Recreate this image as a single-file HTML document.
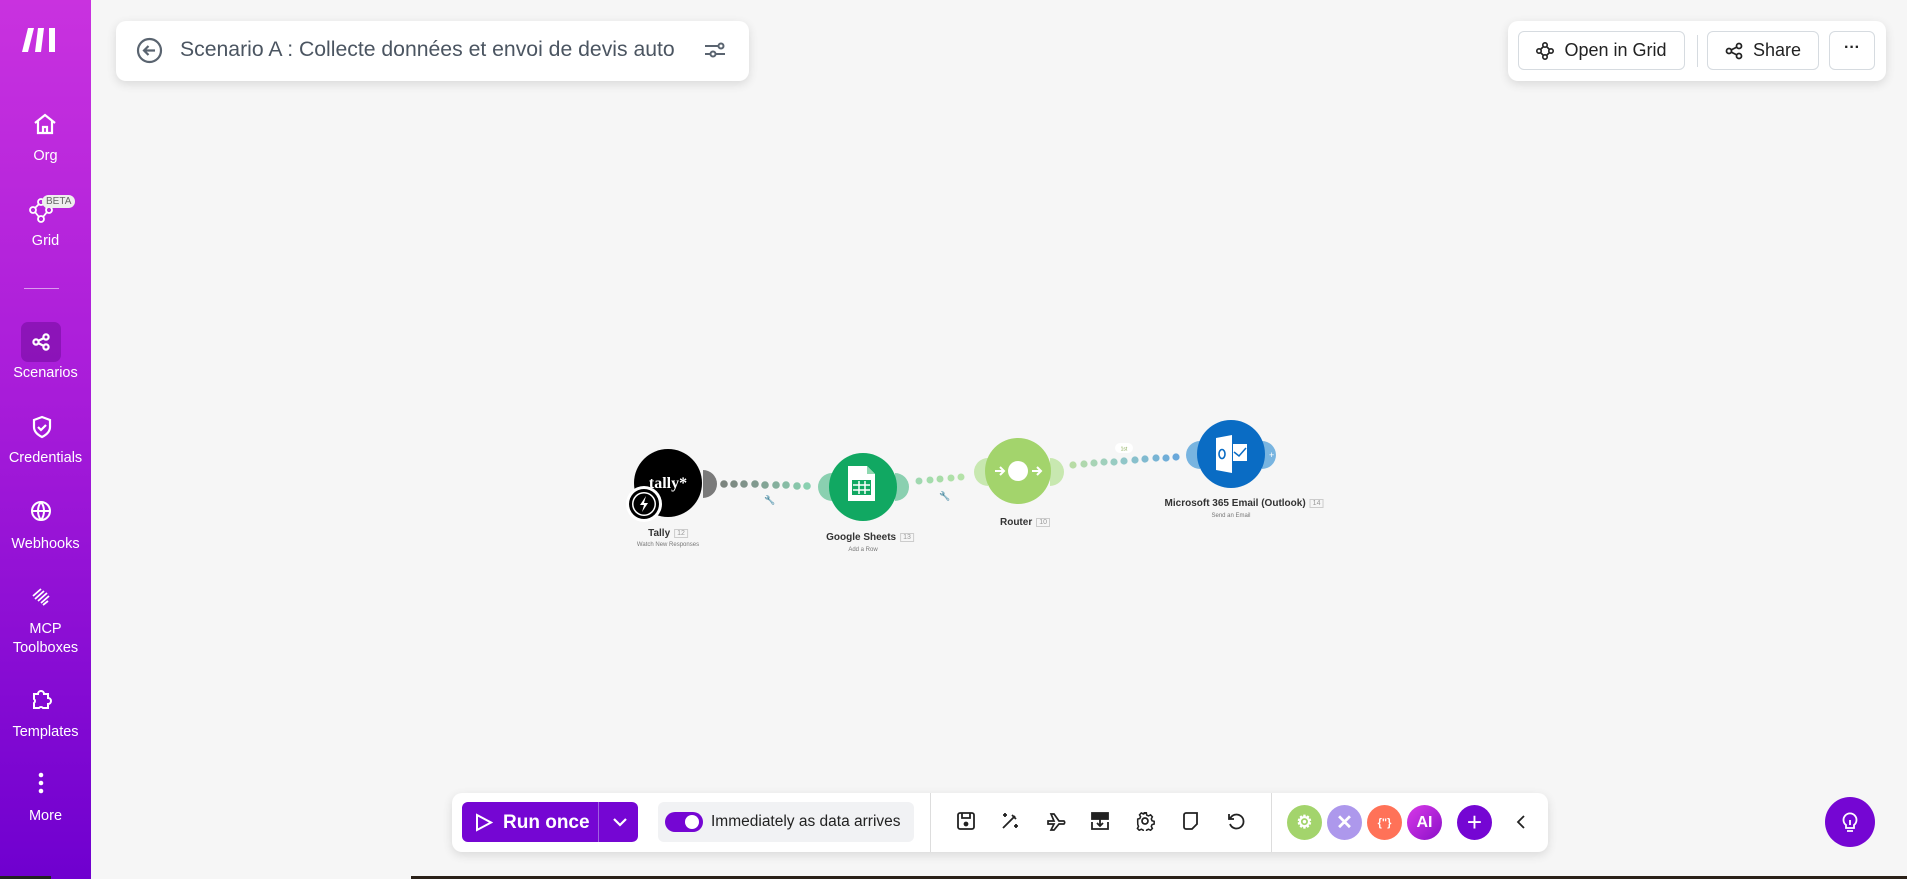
<!DOCTYPE html>
<html><head><meta charset="utf-8"><style>
*{box-sizing:border-box;margin:0;padding:0}
body{width:1907px;height:879px;overflow:hidden;background:#f6f6f6;font-family:"Liberation Sans",sans-serif;position:relative}
.sb{position:absolute;left:0;top:0;width:91px;height:879px;background:linear-gradient(180deg,#c932df 0%,#a81cd9 45%,#6f00cf 100%)}
.ni{position:absolute;left:0;width:91px;text-align:center;color:#fff;font-size:14.5px}
.ic{position:absolute;left:33px}
.card{position:absolute;background:#fff;border-radius:10px;box-shadow:0 3px 10px rgba(0,0,0,.12)}
.btn{position:absolute;top:10px;height:39px;border:1px solid #d6dbe0;border-radius:6px;font-size:18px;color:#222;display:flex;align-items:center;justify-content:center;gap:10px}
.lbl{position:absolute;font-size:10px;font-weight:bold;color:#333;text-align:center;white-space:nowrap;transform:translateX(-50%)}
.sub{position:absolute;font-size:6px;color:#777;white-space:nowrap;transform:translateX(-50%)}
.num{display:inline-block;border:1px solid #ccc;font-size:7px;color:#999;padding:0 2px;margin-left:4px;font-weight:normal;vertical-align:middle}
.tb{position:absolute;top:811px}
.cc{position:absolute;top:805px;width:35px;height:35px;border-radius:50%;color:#fff;font-weight:bold;display:flex;align-items:center;justify-content:center}
</style></head><body>
<div class="sb">
<svg style="position:absolute;left:22px;top:27px" width="38" height="26" viewBox="0 0 38 26"><path d="M6 1h6L6 25H0z M16 1h6l-3 24h-6z M27 1h6v24h-6z" fill="#fff"/></svg>
<svg class="ic" style="top:113px" width="24" height="22" viewBox="0 0 24 22" fill="none" stroke="#fff" stroke-width="2.2"><path d="M2 10L12 2l10 8M5 8v12h14V8M10 20v-6h4v6"/></svg>
<div class="ni" style="top:148px">Org</div>
<svg class="ic" style="top:198px;left:29px" width="26" height="26" viewBox="0 0 26 26" fill="none" stroke="#fff" stroke-width="1.8"><circle cx="12" cy="4" r="3"/><circle cx="4" cy="12" r="3"/><circle cx="20" cy="12" r="3"/><circle cx="12" cy="21" r="3"/><path d="M10 6l-4 4M14 6l4 4M6 14l4 5M18 14l-4 5"/></svg>
<div style="position:absolute;left:42px;top:195px;background:#eee;color:#666;font-size:10px;border-radius:7px;padding:1px 4px">BETA</div>
<div class="ni" style="top:233px">Grid</div>
<div style="position:absolute;left:24px;top:288px;width:35px;height:1px;background:rgba(255,255,255,.55)"></div>
<div style="position:absolute;left:21px;top:322px;width:40px;height:40px;border-radius:7px;background:rgba(80,0,120,.35)"></div>
<svg class="ic" style="top:333px;left:32px" width="18" height="18" viewBox="0 0 18 18" fill="none" stroke="#fff" stroke-width="2.2"><circle cx="4" cy="9" r="2.6"/><circle cx="14" cy="4" r="2.6"/><circle cx="14" cy="14" r="2.6"/><path d="M6 8l6-3M6 10l6 3"/></svg>
<div class="ni" style="top:365px">Scenarios</div>
<svg class="ic" style="top:415px;left:31px" width="22" height="24" viewBox="0 0 22 24" fill="none" stroke="#fff" stroke-width="2.2"><path d="M11 2l8 3v7c0 5-4 8-8 10-4-2-8-5-8-10V5z"/><path d="M7 12l3 3 5-5"/></svg>
<div class="ni" style="top:450px">Credentials</div>
<svg class="ic" style="top:500px;left:30px" width="22" height="22" viewBox="0 0 22 22" fill="none" stroke="#fff" stroke-width="2"><circle cx="11" cy="11" r="9"/><path d="M2 11h18M11 2c-4 5-4 13 0 18M11 2c4 5 4 13 0 18"/></svg>
<div class="ni" style="top:536px">Webhooks</div>
<svg class="ic" style="top:587px;left:31px" width="22" height="20" viewBox="0 0 22 20" fill="none" stroke="#fff" stroke-width="1.8"><path d="M2 9l8-7M4 12l9-8M7 14l9-8M10 16l8-7M12 18l5-4"/></svg>
<div class="ni" style="top:620px;line-height:19px">MCP<br>Toolboxes</div>
<svg class="ic" style="top:688px;left:30px" width="22" height="22" viewBox="0 0 22 22" fill="none" stroke="#fff" stroke-width="2"><path d="M4 6h4a3 3 0 016 0h4v4a3 3 0 010 6v4h-5a2.5 2.5 0 00-4 0H4v-5a2.5 2.5 0 000-4z"/></svg>
<div class="ni" style="top:724px">Templates</div>
<svg class="ic" style="top:772px;left:38px" width="6" height="22" viewBox="0 0 6 22" fill="#fff"><circle cx="3" cy="3" r="2.3"/><circle cx="3" cy="11" r="2.3"/><circle cx="3" cy="19" r="2.3"/></svg>
<div class="ni" style="top:808px">More</div>
</div>

<div class="card" style="left:116px;top:21px;width:633px;height:60px">
<svg style="position:absolute;left:20px;top:16px" width="27" height="27" viewBox="0 0 27 27" fill="none" stroke="#5a6470" stroke-width="2.2"><circle cx="13.5" cy="13.5" r="11.5"/><path d="M19 13.5H8M12.5 9l-4.5 4.5 4.5 4.5"/></svg>
<div style="position:absolute;left:64px;top:17px;font-size:21.2px;color:#4b5561;white-space:nowrap">Scenario A : Collecte données et envoi de devis auto</div>
<svg style="position:absolute;left:588px;top:19px" width="22" height="20" viewBox="0 0 22 20" fill="none" stroke="#5a6470" stroke-width="2"><path d="M1 6h13M1 14h5"/><circle cx="17" cy="6" r="2.5"/><circle cx="9" cy="14" r="2.5"/><path d="M12 14h9"/></svg>
</div>

<div class="card" style="left:1508px;top:21px;width:378px;height:60px">
<div class="btn" style="left:10px;width:167px"><svg width="18" height="18" viewBox="0 0 18 18" fill="none" stroke="#222" stroke-width="1.6"><circle cx="9" cy="3" r="2.2"/><circle cx="3" cy="9" r="2.2"/><circle cx="15" cy="9" r="2.2"/><circle cx="9" cy="15" r="2.2"/><path d="M7.5 4.5L4.5 7.5M10.5 4.5l3 3M4.5 10.5l3 3M13.5 10.5l-3 3"/></svg>Open in Grid</div>
<div style="position:absolute;left:189px;top:14px;width:1px;height:32px;background:#d6dbe0"></div>
<div class="btn" style="left:199px;width:112px"><svg width="18" height="18" viewBox="0 0 18 18" fill="none" stroke="#222" stroke-width="1.8"><circle cx="4" cy="9" r="2.5"/><circle cx="14" cy="4" r="2.5"/><circle cx="14" cy="14" r="2.5"/><path d="M6 8l6-3M6 10l6 3"/></svg>Share</div>
<div class="btn" style="left:321px;width:46px;font-weight:bold;font-size:16px;padding-bottom:6px">···</div>
</div>

<svg style="position:absolute;left:0;top:0" width="1907" height="879">
<g>
<circle cx="724" cy="484" r="3.8" fill="#7c857f"/><circle cx="734" cy="484" r="3.8" fill="#7e8c84"/><circle cx="744" cy="484" r="3.8" fill="#80938a"/><circle cx="755" cy="484" r="3.8" fill="#819a8f"/><circle cx="765" cy="485" r="3.8" fill="#83a596"/><circle cx="776" cy="485" r="3.8" fill="#85b09d"/><circle cx="786" cy="485" r="3.8" fill="#87bca5"/><circle cx="807" cy="486" r="3.8" fill="#8ad0b0"/><circle cx="797" cy="486" r="3.8" fill="#88c6aa"/>
<circle cx="919" cy="481" r="3.5" fill="#a0d8b0"/><circle cx="930" cy="480" r="3.5" fill="#a4dcac"/><circle cx="940" cy="479" r="3.5" fill="#a8dca8"/><circle cx="951" cy="478" r="3.5" fill="#aee0a8"/><circle cx="961" cy="477" r="3.5" fill="#b4e2a8"/>
<circle cx="1073" cy="465" r="3.6" fill="#b8dca6"/><circle cx="1084" cy="464" r="3.6" fill="#b0d8ae"/><circle cx="1094" cy="463" r="3.6" fill="#a8d4b6"/><circle cx="1104" cy="462" r="3.6" fill="#a0d0bc"/><circle cx="1114" cy="462" r="3.6" fill="#98ccc2"/><circle cx="1124" cy="461" r="3.6" fill="#90c6c8"/><circle cx="1135" cy="460" r="3.6" fill="#88c0cc"/><circle cx="1145" cy="459" r="3.6" fill="#80bad0"/><circle cx="1156" cy="458" r="3.6" fill="#78b4d4"/><circle cx="1166" cy="458" r="3.6" fill="#70aed8"/><circle cx="1176" cy="457" r="3.6" fill="#6aa8da"/>
</g>
<text x="764" y="503" font-size="9" fill="#555">🔧</text>
<text x="939" y="499" font-size="9" fill="#555">🔧</text>
<path d="M703 470a14 14 0 010 28z" fill="#7a7a7a"/>
<path d="M832 473a14 14 0 000 28z" fill="#8ad0b0"/><path d="M895 473a14 14 0 010 28z" fill="#8ad0b0"/>
<path d="M988 458a14 14 0 000 28z" fill="#c8e8b0"/><path d="M1050 458a14 14 0 010 28z" fill="#c8e8b0"/>
<path d="M1200 441a14 14 0 000 28z" fill="#78b4e0"/><path d="M1262 441a14 14 0 010 28z" fill="#78b4e0"/>
<text x="1269" y="458" font-size="9" fill="#fff">+</text>
<circle cx="668" cy="483" r="34" fill="#000"/>
<text x="668" y="488" font-family="Liberation Serif,serif" font-weight="bold" font-size="16" fill="#fff" text-anchor="middle">tally*</text>
<circle cx="644" cy="504" r="18" fill="#fff"/><circle cx="644" cy="504" r="15" fill="#000"/><circle cx="644" cy="504" r="12" fill="#fff"/><circle cx="644" cy="504" r="10.5" fill="#000"/>
<path d="M646 496l-6 9h4l-2 7 6-9h-4z" fill="#fff"/>
<circle cx="863" cy="487" r="34" fill="#11a862"/>
<path d="M848 466h19l8 8v27h-27z" fill="#fff"/><path d="M867 466v8h8z" fill="#8fd8b0"/>
<rect x="852" y="480" width="19" height="15" fill="#11a862"/>
<path d="M853 485h17M853 490h17M859 481v13M865 481v13" stroke="#fff" stroke-width="1.5"/>
<circle cx="1018" cy="471" r="33" fill="#a3d46c"/><circle cx="1018" cy="471" r="10" fill="#fff"/>
<path d="M995 471h9M1000 467l4 4-4 4M1032 471h9M1037 467l4 4-4 4" stroke="#fff" stroke-width="2" fill="none"/>
<circle cx="1231" cy="454" r="34" fill="#0a6cc4"/>
<path d="M1216 438l16-3v38l-16-3z" fill="#fff"/><rect x="1233" y="444" width="14" height="17" fill="#fff"/>
<path d="M1234 452l5 4 7-8" stroke="#0a6cc4" stroke-width="1.5" fill="none"/>
<ellipse cx="1222" cy="454" rx="3" ry="4.5" fill="none" stroke="#0a6cc4" stroke-width="1.6"/>
<rect x="1115" y="443" width="18" height="10" rx="5" fill="#fff"/><text x="1124" y="450.5" font-size="5" fill="#8a5" text-anchor="middle">1st</text>
<rect x="0" y="876" width="51" height="3" fill="#222"/><rect x="411" y="876" width="1496" height="3" fill="#2a2118"/>
</svg>
<div class="lbl" style="left:668px;top:528px">Tally<span class="num">12</span></div>
<div class="sub" style="left:668px;top:542px">Watch New Responses</div>
<div class="lbl" style="left:870px;top:532px">Google Sheets<span class="num">13</span></div>
<div class="sub" style="left:863px;top:547px">Add a Row</div>
<div class="lbl" style="left:1025px;top:517px">Router<span class="num">10</span></div>
<div class="lbl" style="left:1244px;top:498px">Microsoft 365 Email (Outlook)<span class="num">14</span></div>
<div class="sub" style="left:1231px;top:513px">Send an Email</div>

<div class="card" style="left:452px;top:793px;width:1096px;height:59px;border-radius:10px"></div>
<div style="position:absolute;left:462px;top:802px;width:176px;height:40px;border-radius:6px;background:#7506d3;color:#fff;font-size:19px;font-weight:bold">
<svg style="position:absolute;left:13px;top:11px" width="18" height="19" viewBox="0 0 18 19" fill="none" stroke="#fff" stroke-width="2"><path d="M2 2l14 7.5L2 17z"/></svg>
<span style="position:absolute;left:41px;top:10px">Run once</span>
<div style="position:absolute;left:136px;top:0;width:1px;height:40px;background:#a060e0"></div>
<svg style="position:absolute;left:150px;top:15px" width="16" height="10" viewBox="0 0 16 10" fill="none" stroke="#fff" stroke-width="2.2"><path d="M2 2l6 6 6-6"/></svg>
</div>
<div style="position:absolute;left:658px;top:802px;width:256px;height:40px;border-radius:6px;background:#f1f2f4">
<div style="position:absolute;left:7px;top:10px;width:38px;height:20px;border-radius:10px;background:#7506d3"><div style="position:absolute;left:20px;top:3px;width:14px;height:14px;border-radius:50%;background:#fff"></div></div>
<span style="position:absolute;left:53px;top:11px;font-size:15.5px;color:#222">Immediately as data arrives</span>
</div>
<div style="position:absolute;left:930px;top:793px;width:1px;height:59px;background:#ddd"></div>
<div style="position:absolute;left:1271px;top:793px;width:1px;height:59px;background:#ddd"></div>
<svg class="tb" style="left:956px" width="20" height="20" viewBox="0 0 20 20" fill="none" stroke="#222" stroke-width="1.8"><rect x="2" y="2" width="16" height="16" rx="2"/><path d="M6 2v5h8V2"/><circle cx="10" cy="13" r="1.5" fill="#222"/></svg>
<svg class="tb" style="left:1000px" width="20" height="20" viewBox="0 0 20 20" fill="none" stroke="#222" stroke-width="1.8"><path d="M3 17L15 5M12 4l4 4M5 2v4M3 4h4M16 13v4M14 15h4"/></svg>
<svg class="tb" style="left:1046px" width="22" height="20" viewBox="0 0 22 20" fill="none" stroke="#222" stroke-width="1.7"><path d="M2 10h6l-3-7h3l5 7h5a2 2 0 010 3h-5l-5 6H5l3-6H2z"/></svg>
<svg class="tb" style="left:1090px" width="20" height="20" viewBox="0 0 20 20" fill="none" stroke="#222" stroke-width="1.8"><rect x="2" y="2" width="16" height="6" fill="#222"/><path d="M2 11v7h16v-7M10 8v7M7 12l3 3 3-3"/></svg>
<svg class="tb" style="left:1135px" width="20" height="20" viewBox="0 0 20 20" fill="none" stroke="#222" stroke-width="1.7"><circle cx="10" cy="10" r="3"/><path d="M8.5 2h3l.5 2.5 2 1 2.3-1.2 2 2.2-1.2 2.3.8 2 2.4.7v3l-2.4.6-.8 2 1.2 2.3-2 2-2.3-1.2-2 .9-.5 2.4h-3l-.5-2.4-2-.9-2.3 1.2-2-2 1.2-2.3-.8-2L2 12v-3l2.4-.7.8-2L4 4.3l2-2.2 2.3 1.2 2-1z" transform="scale(.9) translate(1 0)"/></svg>
<svg class="tb" style="left:1181px" width="20" height="20" viewBox="0 0 20 20" fill="none" stroke="#222" stroke-width="1.8"><path d="M3 4a2 2 0 012-2h11v11l-5 5H5a2 2 0 01-2-2z"/></svg>
<svg class="tb" style="left:1225px" width="20" height="20" viewBox="0 0 20 20" fill="none" stroke="#222" stroke-width="1.8"><path d="M5 8a7 7 0 110 5M4 3v5h5"/></svg>
<div class="cc" style="left:1287px;background:#a3d46c;font-size:18px">⚙</div>
<div class="cc" style="left:1327px;background:#ad98ec;font-size:20px">✕</div>
<div class="cc" style="left:1367px;background:#ff7258;font-size:11px">{"}</div>
<div class="cc" style="left:1407px;background:linear-gradient(135deg,#d93ae8,#8a10c8);font-size:16px">AI</div>
<div class="cc" style="left:1457px;background:#7506d3;font-size:26px;font-weight:normal">+</div>
<svg style="position:absolute;left:1516px;top:814px" width="10" height="16" viewBox="0 0 10 16" fill="none" stroke="#222" stroke-width="1.8"><path d="M8 2L2 8l6 6"/></svg>
<div style="position:absolute;left:1825px;top:797px;width:50px;height:50px;border-radius:50%;background:#7506d3"></div>
<svg style="position:absolute;left:1840px;top:810px" width="20" height="24" viewBox="0 0 20 24" fill="none" stroke="#fff" stroke-width="1.8"><path d="M6 15a6.5 6.5 0 118 0v3H6zM7 21h6M10 10v5"/></svg>
</body></html>
